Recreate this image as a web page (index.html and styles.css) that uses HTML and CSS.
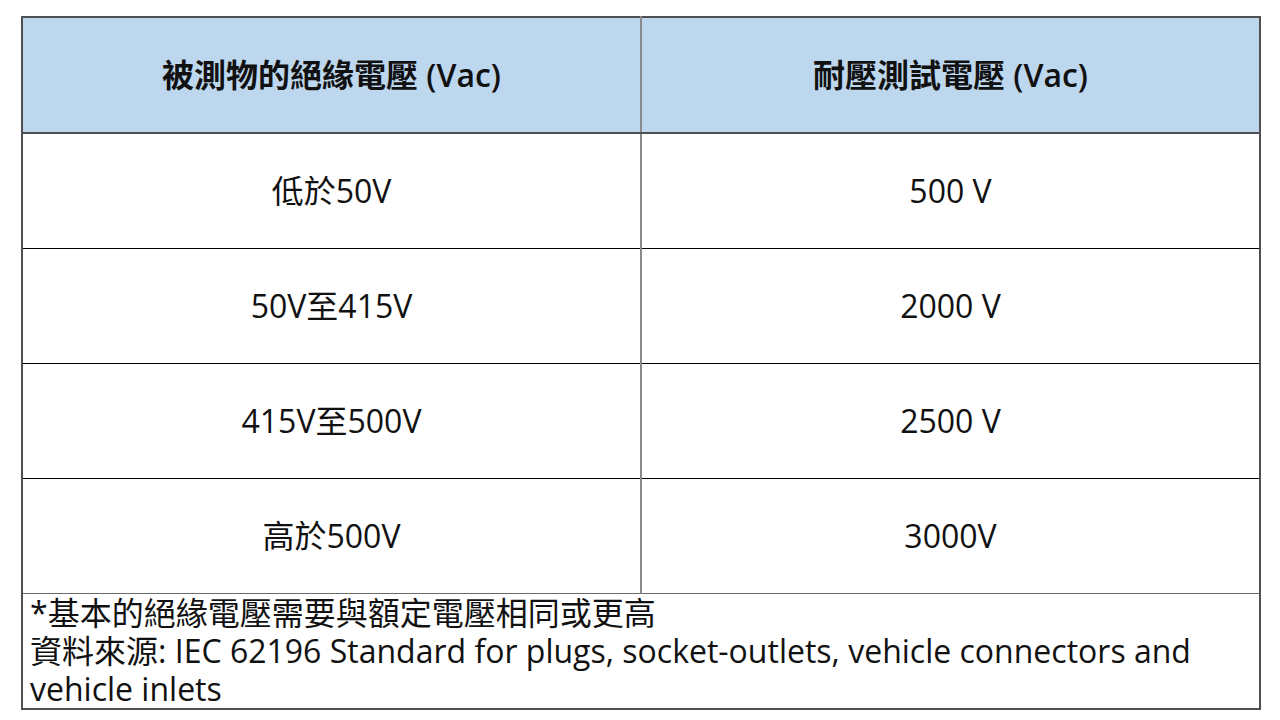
FILE: index.html
```html
<!DOCTYPE html>
<html lang="zh-Hant">
<head>
<meta charset="utf-8">
<title>耐壓測試電壓</title>
<link rel="stylesheet" href="styles.css">
</head>
<body>
<table class="spec">
  <colgroup><col class="c"><col class="c"></colgroup>
  <thead>
    <tr class="head">
      <th>被測物的絕緣電壓 (Vac)</th>
      <th>耐壓測試電壓 (Vac)</th>
    </tr>
  </thead>
  <tbody>
    <tr class="row"><td>低於50V</td><td>500 V</td></tr>
    <tr class="row"><td>50V至415V</td><td>2000 V</td></tr>
    <tr class="row"><td>415V至500V</td><td>2500 V</td></tr>
    <tr class="row"><td>高於500V</td><td>3000V</td></tr>
    <tr class="foot">
      <td colspan="2">*基本的絕緣電壓需要與額定電壓相同或更高<br>資料來源: IEC 62196 Standard for plugs, socket-outlets, vehicle connectors and vehicle inlets</td>
    </tr>
  </tbody>
</table>
</body>
</html>
```
FILE: styles.css
```css
html, body {
  margin: 0;
  padding: 0;
  background: #ffffff;
}
body {
  font-family: "Open Sans", "Noto Sans CJK TC", sans-serif;
  color: #111111;
}
.spec {
  margin: 16px 0 0 21px;
  width: 1240px;
  table-layout: fixed;
  border-collapse: collapse;
  border: 2px solid #505050;
}
.spec th, .spec td {
  padding: 0;
  text-align: center;
  vertical-align: middle;
  font-size: 32px;
  line-height: 40px;
}
.spec th + th, .spec td + td {
  border-left: 2px solid #8a8a8a;
}
.head {
  height: 116px;
  background: #bdd7ee;
}
.head th {
  font-weight: 600;
  border-bottom: 2px solid #505050;
}
.row {
  height: 115px;
}
.row td {
  font-weight: 400;
  border-bottom: 1px solid #000000;
}
.row:nth-last-child(2) td {
  border-bottom: 1px solid #6a6a6a;
}
.foot td {
  text-align: left;
  vertical-align: top;
  padding: 0 6px 0 7px;
  line-height: 38px;
}
```
